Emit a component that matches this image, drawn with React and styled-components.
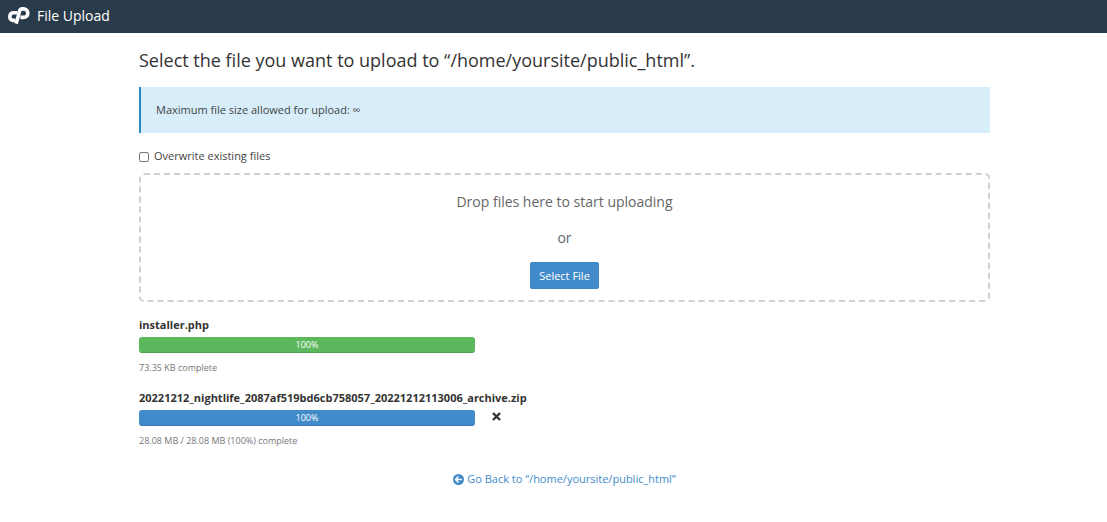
import React, { useState } from "react";
import styled, { createGlobalStyle } from "styled-components";

const GlobalStyle = createGlobalStyle`
    * {
        box-sizing: border-box;
    }

    body {
        margin: 0;
        background: #fff;
        color: #333;
        font-family: "Open Sans", "Noto Sans", sans-serif;
        font-size: 11px;
        line-height: 16px;
    }
`;

const Header = styled.header`
    display: flex;
    align-items: center;
    gap: 7px;
    height: 33px;
    padding: 0 7px 2px;
    background: #293a4a;
    color: #fff;
    font-size: 14px;
`;

const Logo = styled.svg`
    width: 23px;
    height: 17px;
`;

const Main = styled.main`
    padding: 14px 117px 24px 139px;
`;

const Title = styled.h1`
    margin: 0 0 14px;
    font-size: 18px;
    font-weight: 400;
    line-height: 26px;
`;

const Callout = styled.div`
    padding: 15px;
    border-left: 2px solid #2c87c3;
    background: #d7edf9;
    color: #444;
`;

const CheckLabel = styled.label`
    display: flex;
    align-items: center;
    gap: 5px;
    margin: 15px 0 9px;
    color: #444;
`;

const Checkbox = styled.input`
    appearance: none;
    width: 10px;
    height: 10px;
    margin: 2px 0 0;
    border: 1px solid #767676;
    border-radius: 2px;
    background: #fff;

    &:checked {
        background: #428bca;
    }
`;

const DropZone = styled.section`
    display: flex;
    flex-direction: column;
    align-items: center;
    gap: 12px;
    padding: 15px 0 11px;
    border: 2px dashed #d0d0d0;
    border-radius: 5px;
    color: #666;
    font-size: 14px;
    line-height: 24px;
`;

const SelectButton = styled.button`
    height: 27px;
    padding: 0 8px;
    border: 1px solid #3c86c6;
    border-radius: 2px;
    background: #428bca;
    color: #fff;
    font: inherit;
    font-size: 11px;
    line-height: 16px;
    cursor: pointer;
`;

const Uploads = styled.ul`
    margin: 15px 0 0;
    padding: 0;
    list-style: none;
`;

const Upload = styled.li`
    margin-bottom: 14px;
`;

const FileName = styled.div`
    margin-bottom: 4px;
    font-weight: 700;
`;

const BarRow = styled.div`
    display: flex;
    align-items: flex-start;
    gap: 17px;
`;

const Track = styled.div`
    width: 336px;
    height: 16px;
    border-radius: 3px;
    background: #f5f5f5;
    overflow: hidden;
`;

const Bar = styled.div`
    height: 100%;
    background: ${(props) => (props.$done ? "#5cb85c" : "#428bca")};
    box-shadow: inset 0 -1px 0 rgba(0, 0, 0, 0.15);
    color: #fff;
    font-size: 9px;
    line-height: 16px;
    text-align: center;
`;

const RemoveButton = styled.button`
    display: flex;
    padding: 2px 0;
    border: 0;
    background: none;
    color: #333;
    cursor: pointer;
`;

const Status = styled.div`
    margin-top: 7px;
    color: #777;
    font-size: 9px;
`;

const Footer = styled.div`
    display: flex;
    justify-content: center;
    margin-top: 22px;
`;

const BackLink = styled.a`
    display: flex;
    align-items: center;
    gap: 3px;
    color: #428bca;
    text-decoration: none;
`;

const files = [
    { name: "installer.php", percent: 100, status: "73.35 KB complete", done: true },
    {
        name: "20221212_nightlife_2087af519bd6cb758057_20221212113006_archive.zip",
        percent: 100,
        status: "28.08 MB / 28.08 MB (100%) complete",
        done: false,
    },
];

const FileUpload = ({ file }) => (
    <Upload>
        <FileName>{file.name}</FileName>
        <BarRow>
            <Track>
                <Bar $done={file.done} style={{ width: `${file.percent}%` }}>
                    {file.percent}%
                </Bar>
            </Track>
            {!file.done && (
                <RemoveButton type="button" aria-label="Cancel upload">
                    <svg width="9" height="9" viewBox="0 0 9 9">
                        <path
                            d="M1 1 8 8M8 1 1 8"
                            stroke="currentColor"
                            strokeWidth="2.4"
                        />
                    </svg>
                </RemoveButton>
            )}
        </BarRow>
        <Status>{file.status}</Status>
    </Upload>
);

const App = () => {
    const [overwrite, setOverwrite] = useState(false);

    return (
        <>
            <GlobalStyle />
            <Header>
                <Logo viewBox="0 0 23 17" fill="none" stroke="#fff" strokeWidth="3.6">
                    <path d="M10.6 5.8H6.2A3.9 3.9 0 0 0 5.6 13.400H8.400" />
                    <path d="M9.200 16.600 12.400 4.600Q13 1.900 15.200 1.900H16.600A4.100 4.100 0 0 1 16.600 10.400H13.400" />
                </Logo>
                File Upload
            </Header>
            <Main>
                <Title>
                    Select the file you want to upload to “/home/yoursite/public_html”.
                </Title>
                <Callout>Maximum file size allowed for upload: ∞</Callout>
                <CheckLabel>
                    <Checkbox
                        type="checkbox"
                        checked={overwrite}
                        onChange={(e) => setOverwrite(e.target.checked)}
                    />
                    Overwrite existing files
                </CheckLabel>
                <DropZone>
                    <div>Drop files here to start uploading</div>
                    <div>or</div>
                    <SelectButton type="button">Select File</SelectButton>
                </DropZone>
                <Uploads>
                    {files.map((file) => (
                        <FileUpload key={file.name} file={file} />
                    ))}
                </Uploads>
                <Footer>
                    <BackLink href="#">
                        <svg width="11" height="11" viewBox="0 0 11 11">
                            <circle cx="5.5" cy="5.5" r="5.5" fill="currentColor" />
                            <path
                                d="M9 5.500H3M5.500 2.500 2.500 5.500 5.500 8.500"
                                fill="none"
                                stroke="#fff"
                                strokeWidth="1.500"
                            />
                        </svg>
                        Go Back to “/home/yoursite/public_html”
                    </BackLink>
                </Footer>
            </Main>
        </>
    );
};

export default App;
